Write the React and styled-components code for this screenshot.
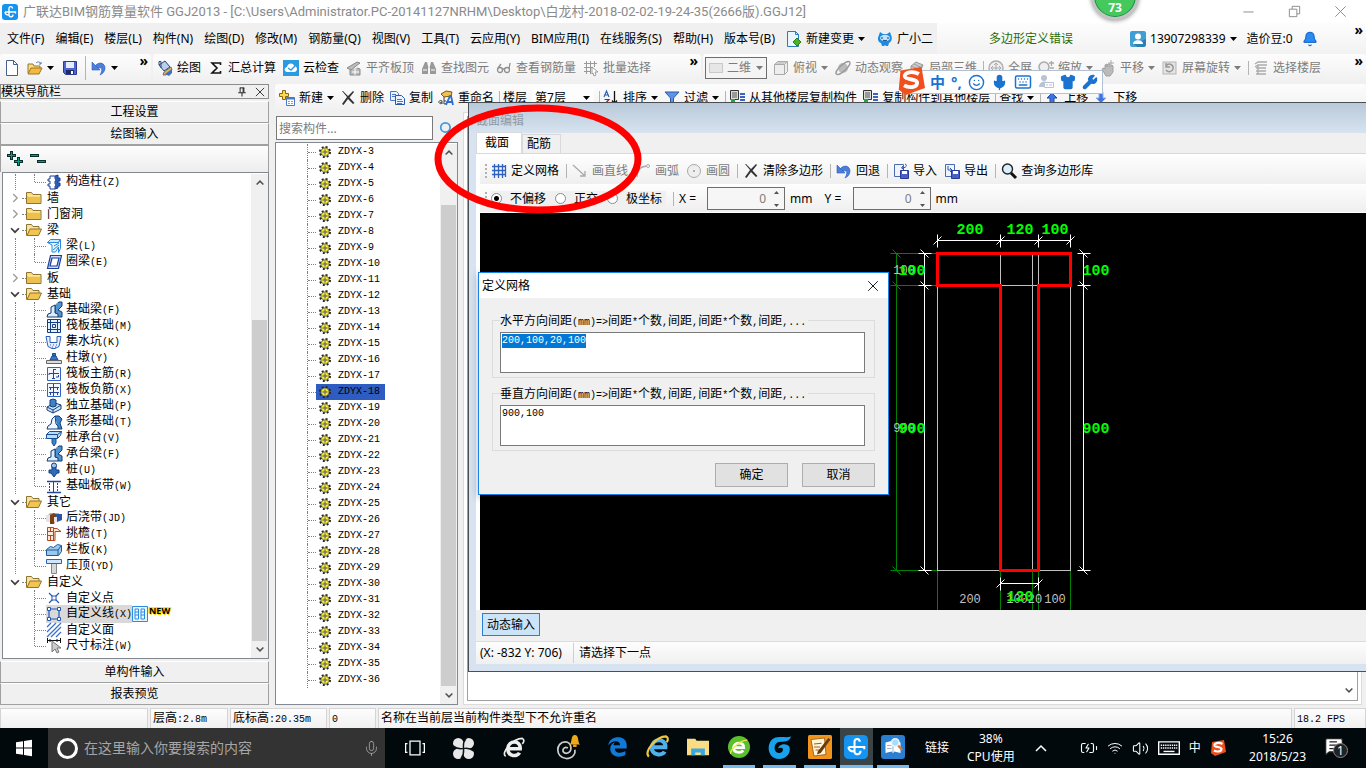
import { useEffect, useRef } from "react";
import styled, { createGlobalStyle } from "styled-components";
import {
  Smile,
  Mic,
  Keyboard,
  Shirt,
  Wrench,
  Bell,
  Search,
  Wifi,
  Volume2,
  BatteryCharging,
  MessageSquareText,
} from "lucide-react";

const menus = [
  "文件(F)",
  "编辑(E)",
  "楼层(L)",
  "构件(N)",
  "绘图(D)",
  "修改(M)",
  "钢筋量(Q)",
  "视图(V)",
  "工具(T)",
  "云应用(Y)",
  "BIM应用(I)",
  "在线服务(S)",
  "帮助(H)",
  "版本号(B)",
];

const arvore = [
  { texto: "构造柱(Z)", icone: "coluna", filho: true, ultimo: true },
  { texto: "墙" },
  { texto: "门窗洞" },
  { texto: "梁", aberto: true },
  { texto: "梁(L)", icone: "viga", filho: true },
  { texto: "圈梁(E)", icone: "anel", filho: true, ultimo: true },
  { texto: "板" },
  { texto: "基础", aberto: true },
  { texto: "基础梁(F)", icone: "base", filho: true },
  { texto: "筏板基础(M)", icone: "radier", filho: true },
  { texto: "集水坑(K)", icone: "poco", filho: true },
  { texto: "柱墩(Y)", icone: "pedestal", filho: true },
  { texto: "筏板主筋(R)", icone: "barra", filho: true },
  { texto: "筏板负筋(X)", icone: "barra2", filho: true },
  { texto: "独立基础(P)", icone: "sapata", filho: true },
  { texto: "条形基础(T)", icone: "corrida", filho: true },
  { texto: "桩承台(V)", icone: "bloco", filho: true },
  { texto: "承台梁(F)", icone: "base", filho: true },
  { texto: "桩(U)", icone: "estaca", filho: true },
  { texto: "基础板带(W)", icone: "faixa", filho: true, ultimo: true },
  { texto: "其它", aberto: true },
  { texto: "后浇带(JD)", icone: "junta", filho: true },
  { texto: "挑檐(T)", icone: "beiral", filho: true },
  { texto: "栏板(K)", icone: "guarda", filho: true },
  { texto: "压顶(YD)", icone: "topo", filho: true, ultimo: true },
  { texto: "自定义", aberto: true },
  { texto: "自定义点", icone: "ponto", filho: true, fim: true },
  { texto: "自定义线(X)", icone: "linha", filho: true, fim: true, ativo: true },
  { texto: "自定义面", icone: "face", filho: true, fim: true },
  { texto: "尺寸标注(W)", icone: "cota", filho: true, fim: true, ultimo: true },
];

const itens = Array.from({ length: 34 }, (_, i) => `ZDYX-${i + 3}`);

const desenhos = {
  novo: (
    <path d="M2.5.5h7l4 4v11h-11zM9.5.5v4h4" fill="#fff" stroke="#44608c" />
  ),
  abrir: (
    <>
      <path d="M1 13V4h5l1 2h6v2" fill="#f7dc86" stroke="#9a7626" />
      <path d="M1 14l3-6h11l-3 6z" fill="#f5b942" stroke="#9a7626" />
      <path d="M9 3c2-2 4-1 5 1m0-2v2h-2" fill="none" stroke="#5a78b0" />
    </>
  ),
  salvar: (
    <>
      <path d="M1.5 1.5h13v13h-11l-2-2z" fill="#5066cc" stroke="#2a3a96" />
      <path d="M4 2h8v6H4z" fill="#e4edfb" />
      <path d="M4 10h8v4H4z" fill="#222b66" />
      <path d="M9 11h2v3H9z" fill="#fff" />
    </>
  ),
  desfazer: (
    <>
      <path d="M4 6c4-5 10-3 10 2 0 4-3 6-5 7 2-3 3-8-1-7-1 0-2 1-2 1z" fill="#4c7fdc" stroke="#2c5cb8" strokeWidth=".6" />
      <path d="M1 2v8h8z" fill="#4c7fdc" stroke="#2c5cb8" strokeWidth=".6" />
    </>
  ),
  pintar: (
    <>
      <path d="M2 5l6-4 5 6-6 4z" fill="#b8d0ee" stroke="#29466e" />
      <path d="M2 5V1.5h2V8" fill="none" stroke="#29466e" />
      <path d="M14 7l1 3-6 5H6l1-3z" fill="#e3b64c" stroke="#4b5a86" strokeWidth=".8" />
      <path d="M8 14l7-5v4l-3 3z" fill="#3d6fc4" />
    </>
  ),
  soma: <path d="M12.5 5V3H4l5 5-5 5h8.5v-2" fill="none" stroke="#111" strokeWidth="1.6" />,
  nuvem: (
    <>
      <rect width="16" height="16" fill="#2a9be0" />
      <path d="M4 12c-4-1-2-5 0-5 1-5 7-4 7-1 4 0 4 6 0 6z" fill="#fff" />
      <path d="M5 8l3 2 4-4" fill="none" stroke="#2a9be0" strokeWidth="1.4" />
    </>
  ),
  placa: (
    <>
      <path d="M1 8l10-6 3 1-9 7zM4 10v5h10V9l-3-1" fill="#bbb" stroke="#8a8a8a" />
      <path d="M6 12h7M9 9v6" stroke="#fff" />
    </>
  ),
  binoculo: (
    <>
      <path d="M4 2h2l1 4v8H1V9zM10 2h2l3 7v5H9V6z" fill="#999" />
      <path d="M2 10h4M10 10h4M7 7h2" stroke="#ddd" strokeWidth="1.5" />
    </>
  ),
  oculos: (
    <g fill="none" stroke="#8f8f8f" strokeWidth="1.3">
      <circle cx="4" cy="10" r="2.5" />
      <circle cx="11" cy="10" r="2.5" />
      <path d="M2 8l3-4M13 9l1-6M7 9h1" />
    </g>
  ),
  lote: (
    <>
      <path d="M1 3.5h13M1 7.5h9M1 11.5h7M3.5 1v13M7.5 1v13M11.5 1v6" stroke="#999" fill="none" />
      <path d="M9 7l6 5h-3l1 3-2 1-1-3-1 1z" fill="#fff" stroke="#888" strokeWidth=".8" />
    </>
  ),
  plano: <rect x="1.5" y="3.5" width="13" height="9" fill="#e6e6e6" stroke="#c9c9c9" />,
  cubo: (
    <>
      <path d="M1.5 4.5l3-3h10v10l-3 3h-10z" fill="#eee" stroke="#aaa" />
      <path d="M1.5 4.5h10v10M11.5 4.5l3-3" fill="none" stroke="#aaa" />
      <path d="M2 4l3-2h9l-3 2z" fill="#ccc" />
    </>
  ),
  orbita: (
    <>
      <circle cx="8" cy="8" r="5" fill="#bbb" />
      <ellipse cx="8" cy="8" rx="9" ry="3" transform="rotate(-42 8 8)" fill="none" stroke="#999" strokeWidth="1.3" />
    </>
  ),
  local: (
    <>
      <path d="M2 6l5-4 7 3-4 9-8-3z" fill="#ccc" stroke="#999" />
      <path d="M2 6l7 3 5-4M9 9l1 5M5 4l6 3" fill="none" stroke="#999" />
    </>
  ),
  tela: (
    <g fill="none" stroke="#aaa">
      <circle cx="8" cy="8" r="7" fill="#eee" strokeWidth="1.3" />
      <path d="M8 3v10M3 8h10M6 5l2-2 2 2M6 11l2 2 2-2M5 6L3 8l2 2M11 6l2 2-2 2" />
    </g>
  ),
  zoom: (
    <g fill="none" stroke="#aaa">
      <circle cx="6" cy="7" r="5" fill="#eee" strokeWidth="1.5" />
      <path d="M9 11l3 4M11 3h5M13.5 1v5M12 8h4" strokeWidth="1.3" />
    </g>
  ),
  mao: (
    <>
      <path d="M2 9l2-1 1 1V5l2-1v3l1-3h2v3l2-2 1 1v6l-3 4H6z" fill="#bbb" stroke="#a0a0a0" />
      <path d="M11 0v6M8 3h6" stroke="#aaa" />
    </>
  ),
  girar: (
    <>
      <rect x="1" y="2" width="13" height="12" fill="#e4e4e4" stroke="#b5b5b5" />
      <path d="M4 6c3-4 8-1 7 3-1 3-5 4-7 1M4 3v4h4" fill="none" stroke="#999" strokeWidth="1.5" />
    </>
  ),
  andares: (
    <g fill="none" stroke="#aaa" strokeWidth="1.3">
      <path d="M2 4l3-2h9M2 7l3-2h9M3 8h10M3 11h10M3 14h10M5 5v9" />
    </g>
  ),
  criar: (
    <>
      <path d="M3.5.5h3v3h3v3h-3v3h-3v-3h-3v-3h3z" fill="#ffd94a" stroke="#8a6a10" />
      <path d="M7.5 7.5h8v8h-8z" fill="#fff" stroke="#4a78c8" />
      <path d="M7.5 8.5h8" stroke="#4a78c8" strokeWidth="2" />
      <path d="M9 11.5h2m1 0h2M9 13.5h2m1 0h2" stroke="#7da0dc" />
    </>
  ),
  excluir: (
    <path d="M2 1l5 6-5 7 1.5 1L8 9l5 5 1.5-1-5-5.500L14 2l-1-1-5 5-5-5z" fill="#333" />
  ),
  copiar: (
    <>
      <path d="M1.5 1.5h6l2 2v7h-8z" fill="#eaf2ff" stroke="#4a78c8" />
      <path d="M6.5 5.5h6l3 3v6h-9z" fill="#eaf2ff" stroke="#2c58a8" />
      <path d="M3 4.5h4M3 6.5h3M8 9.5h5M8 11.5h6M8 13.5h5" stroke="#4a78c8" />
    </>
  ),
  renomear: (
    <>
      <path d="M3 4l5-3 6 1-1 4-7 1z" fill="#f0c050" stroke="#7a5a18" />
      <path d="M1 13c-1-3 3-3 3-2v3M4 12c-3 0-3 3 0 1M6 7v7c4 0 3-4 0-3" fill="none" stroke="#444" />
      <path d="M8 15l4-9h1l2 9M10 12h4" fill="none" stroke="#2c6fd0" strokeWidth="1.8" />
    </>
  ),
  ordenar: (
    <>
      <path d="M1 7l2.5-6L6 7M2 5h3" fill="none" stroke="#2c5cb8" strokeWidth="1.2" />
      <path d="M1.5 9.5H6l-4.5 5H6" fill="none" stroke="#a02020" strokeWidth="1.2" />
      <path d="M11.5 1v12M9 10.5l2.5 3 2.5-3" fill="none" stroke="#111" strokeWidth="1.3" />
    </>
  ),
  filtro: <path d="M1 2h14l-5.500 6v6l-3 1V8z" fill="#5d93e6" stroke="#2c58a8" />,
  camadas: (
    <>
      <path d="M1.5.5h8v9h-8z" fill="#ddd" stroke="#333" />
      <path d="M3 3h5M3 5h5M3 7h5" stroke="#555" />
      <path d="M11 4h5M11 7h5M11 10h5M11 13h5" stroke="#3a66c0" strokeWidth="1.8" />
      <path d="M2 9h4v3h2l-4 4-4-4h2z" fill="#22a83c" />
    </>
  ),
  subir: <path d="M8 3l5 5h-3v6H6V8H3z" fill="#3d74e0" stroke="#1f4fae" />,
  descer: <path d="M8 13l5-5h-3V2H6v6H3z" fill="#3d74e0" stroke="#8fb0ee" />,
  folha: (
    <>
      <path d="M1.5.5h8l3 3v12h-11z" fill="#e9f5ff" stroke="#2f79b8" />
      <path d="M9.5.5v3h3" fill="none" stroke="#2f79b8" />
      <path d="M11 7l4 4-4 4-4-4z" fill="#4ab428" stroke="#2c8010" />
    </>
  ),
  mascote: (
    <>
      <path d="M2 4l1-3 3 2h4l3-2 1 3c2 4 0 7-2 8l-1 3H9l-1-1-1 1H5l-1-3C1 11 0 8 2 4z" fill="#1b8ae0" />
      <ellipse cx="8" cy="7" rx="5" ry="3.2" fill="#bfe4ff" />
      <path d="M5 6v2M11 6v2M6 9c1 1 3 1 4 0" stroke="#083a6c" fill="none" />
    </>
  ),
  usuario: (
    <>
      <rect width="16" height="16" rx="2" fill="#3f9fd4" />
      <path d="M16 8v6l-2 2H7l-3-3z" fill="#2c7fb0" />
      <circle cx="8" cy="5.5" r="3" fill="#fff" />
      <path d="M3 13c0-5 10-5 10 0z" fill="#fff" />
    </>
  ),
  marca: (
    <>
      <rect width="16" height="16" rx="3" fill="#1493f0" />
      <path d="M10.5 4.5c0-2.5-3.5-2.5-3.5 0V11c0 2.5 4 2.5 4-.5M3 8h10.5v1.5M3 8c0 2.500 2 3 4 3" fill="none" stroke="#fff" strokeWidth="1.4" />
    </>
  ),
  grade: (
    <path d="M1 3.5h14M1 7.5h14M1 11.5h14M3.5 1v14M7.5 1v14M11.5 1v14M14.5 2v12" stroke="#2f62bd" fill="none" strokeWidth="1.3" />
  ),
  reta: <path d="M1 2l12 11M13 8v5H8" fill="none" stroke="#aaa" strokeWidth="1.3" />,
  arco: (
    <>
      <path d="M2 14C2 7 6 3 13 3" fill="none" stroke="#aaa" strokeWidth="1.3" />
      <circle cx="13" cy="3" r="1.5" fill="#fff" stroke="#aaa" />
    </>
  ),
  circulo: (
    <>
      <circle cx="8" cy="8" r="6.5" fill="#eee" stroke="#aaa" />
      <circle cx="8" cy="8" r="1" fill="#999" />
    </>
  ),
  importar: (
    <>
      <path d="M1.5 1.5h9v12h-9z" fill="#eef4ff" stroke="#4a6cae" />
      <path d="M12 1c3 1 1 4-3 4m1-2L8.5 5 11 6.5" fill="none" stroke="#2c58a8" />
      <path d="M7.5 7.5h8v8h-8z" fill="#4a5fc4" stroke="#2a3a96" />
      <path d="M9 8h5v3H9z" fill="#fff" />
    </>
  ),
  exportar: (
    <>
      <path d="M1.5 1.5h9v12h-9z" fill="#eef4ff" stroke="#4a6cae" />
      <path d="M4 3v4h4M6 5l2 2-2 2" fill="none" stroke="#2c58a8" />
      <path d="M7.5 7.5h8v8h-8z" fill="#4a5fc4" stroke="#2a3a96" />
      <path d="M9 8h5v3H9z" fill="#fff" />
    </>
  ),
  lupa: (
    <>
      <circle cx="6.5" cy="6" r="5" fill="#d8efff" stroke="#222" strokeWidth="1.4" />
      <path d="M10 10l5 5" stroke="#111" strokeWidth="3" />
    </>
  ),
  engrenagem: (
    <>
      <circle cx="8" cy="8" r="6.5" fill="none" stroke="#222" strokeWidth="3" strokeDasharray="2.6 2.5" />
      <circle cx="8" cy="8" r="5.5" fill="#f4ea30" stroke="#444" />
      <path d="M8 3.5v9M3.5 8h9" stroke="#555" strokeDasharray="1.5 1" />
      <circle cx="8" cy="8" r="1.5" fill="#fff" stroke="#222" />
    </>
  ),
  pasta: (
    <>
      <path d="M.5 13.5v-11h5l1.5 2h8v9z" fill="#f7dc86" stroke="#8f7430" />
      <path d="M1 6h13v7H1z" fill="#edc04c" />
      <path d="M2 6h12" stroke="#fff3c0" />
    </>
  ),
  pastaAberta: (
    <>
      <path d="M.5 13.5v-11h5l1.5 2h6v3" fill="#f7e3a0" stroke="#8f7430" />
      <path d="M1 13.5L4 7h11.5l-3 6.5z" fill="#f2c450" stroke="#8f7430" />
    </>
  ),
  coluna: (
    <>
      <path d="M4 2h5v3h2v2H9v3h2v2H9v3H4v-3H2v-2h2V7H2V5h2z" fill="#fff" stroke="#173f94" />
      <path d="M9 2l3-1v3h2v3h-2v2h2v3h-2v2l-3 1" fill="#2f5cb8" stroke="#173f94" />
    </>
  ),
  viga: (
    <>
      <path d="M1.5 4.5l3-3h10l-2 3z" fill="#cdeaff" stroke="#2a8be0" />
      <path d="M1.5 4.5h11l2-3v9l-2 4V9l-3 5H6V7z" fill="#e4f4ff" stroke="#2a8be0" />
      <path d="M8 8l5-3M7 12l6-5" stroke="#2a8be0" />
    </>
  ),
  anel: (
    <path d="M4.5 1.5h11l-3 13h-11zM6 4l-2 8h7l2-8z" fill="#cfdcff" fillRule="evenodd" stroke="#1c3f9c" strokeWidth="1.2" />
  ),
  base: (
    <>
      <path d="M9 3l4-3h3v4l-4 4 4 2v5h-4l-3-4z" fill="#4f93cf" stroke="#123a78" />
      <path d="M9 3l3-2.500" stroke="#bfe0f8" />
      <path d="M1 15l1-3 3-1V5l4-2v8l3 1v3z" fill="#dcecfa" stroke="#123a78" />
    </>
  ),
  radier: (
    <path d="M1.5 1.5h13v13h-13zM4.5 1v14M11.5 1v14M1 4.5h14M1 11.5h14M6.5 6.5h3v3h-3z" fill="#e4f2ff" stroke="#143f80" />
  ),
  poco: (
    <>
      <path d="M0 2.5h4v6h7v-6h4l-2 10-4 2H6l-4-2z" fill="#e8f0ff" stroke="#2b5eb8" />
      <path d="M4 11h1m2 0h1m2 0h1M6 13h1m2 0h1" stroke="#2b5eb8" />
    </>
  ),
  pedestal: (
    <>
      <path d="M4 10l2-4h4l2 4zM6.5 3.5h3v2h-3z" fill="#3a78cc" stroke="#174a94" />
      <path d="M.5 10.5h15v3H.5z" fill="#ddd" stroke="#666" />
    </>
  ),
  barra: (
    <>
      <path d="M1.5 1.5h13v13h-13z" fill="#f2f7ff" stroke="#3560c4" />
      <path d="M7.5 3v10M3 9V7.5h10M10 11h2.5V9M7 3.5h3M6 12.5h3" stroke="#23459c" fill="none" />
    </>
  ),
  barra2: (
    <>
      <path d="M1.5 1.5h13v13h-13z" fill="#f2f7ff" stroke="#3560c4" />
      <path d="M7.5 2v12M3 5.5h10M3 10.5h10M4.5 5v3M11.5 5v3M4.5 10v3M11.5 10v3" stroke="#23459c" fill="none" />
    </>
  ),
  sapata: (
    <>
      <path d="M1 9l8-4 6 2v4l-8 4-6-3z" fill="#cfe3f7" stroke="#123f80" />
      <path d="M4 2l3-1 3 1v6L7 9 4 8z" fill="#3f82c8" stroke="#123f80" />
      <path d="M1 9l6 3 8-5M7 12v3" fill="none" stroke="#123f80" />
    </>
  ),
  corrida: (
    <>
      <path d="M9 2h4l3 3-2 4 2 6h-4" fill="#3f82c8" stroke="#123f80" />
      <path d="M1 15l1-3 3-2 1-5 3-3 1 8 2 2v3z" fill="#f0f6ff" stroke="#123f80" />
    </>
  ),
  bloco: (
    <>
      <path d="M6 7h4v6l-2 3-2-3z" fill="#3f82c8" stroke="#1a4f98" />
      <path d="M.5 4.5l3-3h12l-1 4-3 3H.5z" fill="#b9dcf5" stroke="#1a4f98" />
      <path d="M.5 4.5h11l4-3M11.5 4.5v4" fill="none" stroke="#1a4f98" />
    </>
  ),
  estaca: (
    <>
      <path d="M6 3h4v5h3v3h-2l-3 4-3-4H3V8h3z" fill="#2d6cb8" stroke="#143f80" />
      <circle cx="8" cy="3.5" r="2.5" fill="#9cc8f0" stroke="#143f80" />
    </>
  ),
  faixa: (
    <>
      <path d="M1 3.5h14M1 14.5h14" stroke="#23459c" strokeWidth="1.5" />
      <path d="M7.5 4v10" stroke="#23459c" />
      <path d="M3.5 5v9M11.5 5v9" stroke="#23459c" strokeDasharray="2 1" />
    </>
  ),
  junta: (
    <>
      <path d="M1 6l3-3h9l-3 9H1z" fill="#b9b0a8" />
      <path d="M4 5l4-2 3 2-3 9H4z" fill="#7c3f18" />
      <path d="M10 4h6v6l-5 2z" fill="#2c55a8" />
      <path d="M0 5h4v7H0zM8 7h3v5H8z" fill="#e4e4e4" />
    </>
  ),
  beiral: (
    <path d="M1.5 1.5h6v13h-6zM1 5.5h6M1 9.5h6M4.5 2v3M4.5 10v4M8 2.5h3l4 3H9v9H7" fill="#ffe9dd" stroke="#b04a20" />
  ),
  guarda: (
    <>
      <path d="M.5 7.5l4-3 3 1 4-3 4 1v6l-3 4H.5z" fill="#9cc8ec" stroke="#1a5a98" />
      <path d="M1 8h11l3-4M12 8v5" fill="none" stroke="#1a5a98" />
    </>
  ),
  topo: (
    <>
      <path d="M5.5 5.5h5v10h-5z" fill="#d8d8d8" stroke="#888" />
      <path d="M.5 1.5h15v4H.5z" fill="#cfe6ff" stroke="#2b62c4" />
    </>
  ),
  ponto: (
    <>
      <path d="M3 3l10 10M13 3L3 13" stroke="#2358b8" strokeWidth="1.2" />
      <rect x="6" y="6" width="4" height="4" fill="#fff" stroke="#2358b8" />
    </>
  ),
  linha: (
    <>
      <path d="M3 3h10v10H3z" fill="none" stroke="#2358b8" strokeWidth="1.2" />
      <path d="M1.5 1.5h3v3h-3zM11.5 1.5h3v3h-3zM1.5 11.5h3v3h-3zM11.5 11.5h3v3h-3z" fill="#fff" stroke="#2358b8" />
    </>
  ),
  face: (
    <path d="M1 5l4-4M1 10l9-9M1 15L15 1M5 15L15 5M10 15l5-5" stroke="#3a72cc" strokeWidth="1.3" />
  ),
  cota: (
    <>
      <path d="M1.5 0v5M14.5 0v5M1 2.5h14M4 1v3M11 1v3" stroke="#111" />
      <path d="M6 3v11l3-3 2 4 2-1-2-4h4z" fill="#ccc" stroke="#777" />
    </>
  ),
  livro: (
    <path d="M.5.5h15v15H.5zM3 3h3.5v10H3zM9 3h3.5v10H9zM3 6h4M3 9h4M9 6h4M9 9h4" fill="#eaf6ff" stroke="#2a8be0" />
  ),
  mais: (
    <>
      <path d="M4.5 0v9M0 4.5h9M11.5 6v9M7 10.5h9" stroke="#03302c" strokeWidth="3" />
      <path d="M4.5 1v7M1 4.5h7M11.5 7v7M8 10.5h7" stroke="#0c9a8e" />
    </>
  ),
  menos: (
    <>
      <path d="M0 4.5h9M7 10.5h9" stroke="#03302c" strokeWidth="3" />
      <path d="M1 4.5h7M8 10.5h7" stroke="#0c9a8e" />
    </>
  ),
  janelas: (
    <path d="M0 2.3L7 1.200v6.300H0zM8 1l8-1.200v7.700H8zM0 8.500h7v6.300l-7-1.100zM8 8.500h8v7.700L8 15z" fill="#fff" />
  ),
  visao: (
    <path d="M4 2.5h8v11H4zM2 4.5H.5v7H2M14 4.5h1.5v7H14" fill="none" stroke="#fff" />
  ),
  catavento: (
    <>
      <g fill="#e8e8e8">
        <circle cx="4" cy="4" r="4" />
        <circle cx="12" cy="4" r="4" />
        <circle cx="4" cy="12" r="4" />
        <circle cx="12" cy="12" r="4" />
        <path d="M4 4h8v8H4z" />
      </g>
      <path d="M0 6c4 3 6 2 8 2s4-1 8 2M10 0C7 4 8 6 8 8s1 4-2 8" fill="none" stroke="#0a1214" strokeWidth="1.1" />
    </>
  ),
  eBranco: (
    <>
      <path d="M3.5 8.5h9C13 2 4 2 3.5 8.5c0 6 7 6 8.5 3" fill="none" stroke="#eee" strokeWidth="2.6" />
      <path d="M2 14C-2 12 7 1 14 1c2 1 1 3 0 4" fill="none" stroke="#eee" strokeWidth="1.2" />
    </>
  ),
  espiral: (
    <>
      <path d="M8.5 8c-3-1.500-4 3-1 3 4 0 3.500-6.500-.5-6.500-5.500 0-6 9 .5 9.500 4 0 5.500-3 5-5" fill="none" stroke="#ccc" />
      <path d="M9.5 6c1.500-1 .5-5.500 3-5.500S14 5 15.500 6z" fill="#f0a818" />
      <path d="M11.5 6.700h2" stroke="#f0a818" strokeWidth="1.4" />
    </>
  ),
  edge: (
    <path d="M1 7C2-1 15-1 15 7v2.500H6c0 4 5 4 8 2v3C8 17.500 2 15 2.500 9c.5-3 3-4 3.500-4-1 1-1 2-1 2h5c0-4-6-4-9 0z" fill="#0f7ad8" />
  ),
  ie: (
    <>
      <path d="M4 8.500h9.500C14 2 4.500 2 4 8.500c0 6 7.500 6 9 3" fill="none" stroke="#4db1ee" strokeWidth="2.8" />
      <path d="M2 15C-2 12 7 1 14 1c2 1 1 3 .5 4" fill="none" stroke="#f3c63a" strokeWidth="1.5" />
    </>
  ),
  explorador: (
    <>
      <path d="M0 2h6l1 1.500h9V14H0z" fill="#f9dc84" />
      <path d="M3 14V9h10v5h-3v-2H6v2z" fill="#3aa8e0" />
    </>
  ),
  eVerde: (
    <>
      <circle cx="8" cy="8" r="8" fill="#5cbf2c" />
      <path d="M4 8.500h7.500C12 4 4.500 4 4 8.500c0 4 6 4 7 2" fill="none" stroke="#fff" strokeWidth="2" />
      <path d="M2 13C1 11 8 3 14 3" fill="none" stroke="#f5e84a" />
    </>
  ),
  gAzul: (
    <path d="M16 1c-1 3-3 3.500-7 3.500-5 0-5 7.500-1 7.500 2 0 3-1.500 2.500-3-1-1-3 0-3 0 0-3 6-4 7.500-1 1 4-2 8-7 8C-1 16-1 2 7 1.500c4-.5 6 .5 9-.5z" fill="#18a2ee" />
  ),
  bloco2: (
    <>
      <rect width="16" height="16" rx="1" fill="#f0941c" />
      <path d="M2 3l9-1 1 11-8 1z" fill="#fff6dc" stroke="#a05c10" strokeWidth=".6" />
      <path d="M4 6l5-.5M4 8h4M5 10h3" stroke="#a05c10" strokeWidth=".8" />
      <path d="M6.5 11l7-9 1.500 1-6.500 9-2.500 1z" fill="#6a3a10" />
    </>
  ),
  dicionario: (
    <>
      <rect width="16" height="16" rx="2" fill="#2b7fd0" />
      <path d="M3 5l4-1 1 1 1-1 4 1v7l-4-1-1 1-1-1-4 1z" fill="#fff" />
      <path d="M8 5v7M4 7h3M4 9h3" stroke="#9ab8d8" strokeWidth=".7" />
      <circle cx="9.5" cy="5" r="2.5" fill="#a8dcff" stroke="#e8f6ff" />
      <path d="M11.5 7l2.500 3" stroke="#d97a2c" strokeWidth="1.5" />
    </>
  ),
  sogou: (
    <>
      <path d="M2 2l12-2 2 12-11 4-4-3z" fill="#f0501e" />
      <path d="M12.5 4C9 2 4 3 4.5 5.5c.5 2 7 1 7 3.5 0 3-5 3-7.500 1.500" fill="none" stroke="#fff" strokeWidth="2.2" />
    </>
  ),
  teclado: (
    <>
      <path d="M.5 3.5h15v9H.5z" fill="none" stroke="#fff" />
      <path d="M2 6h12M2 8h12" stroke="#fff" strokeDasharray="1 .6" />
      <path d="M4 10.5h8" stroke="#fff" />
    </>
  ),
  pessoa: (
    <>
      <circle cx="6" cy="4" r="3" fill="#b9c3d4" />
      <path d="M1 13c0-7 10-7 10-2v2z" fill="#b9c3d4" />
      <path d="M6.5 8.5h9v5h-9z" fill="#fff" stroke="#b9c3d4" />
      <path d="M8 11h2m1 0h3" stroke="#b9c3d4" />
    </>
  ),
  alfinete: (
    <path d="M5 2.5h6M5.5 2.5v6M9.5 2.5v6M10.5 2.5v6M3 9h10M8 9v5" fill="none" stroke="#111" strokeWidth="1.2" />
  ),
  fechar: <path d="M2.5 2.5l11 11M13.5 2.5l-11 11" fill="none" stroke="currentColor" />,
  minimizar: <path d="M2.5 8.5h11" stroke="currentColor" />,
  restaurar: (
    <path d="M2.5 5.5h8v8h-8zM5.5 5.5v-3h8v8h-3" fill="none" stroke="currentColor" />
  ),
  cima: <path d="M3.5 10L8 5.5l4.5 4.5" fill="none" stroke="currentColor" strokeWidth="2" />,
  baixo: <path d="M3.5 6L8 10.5 12.500 6" fill="none" stroke="currentColor" strokeWidth="2" />,
  direita: <path d="M6 3.5L10.5 8 6 12.500" fill="none" stroke="currentColor" strokeWidth="1.5" />,
  mostrar: <path d="M3 11l5-5 5 5" fill="none" stroke="currentColor" strokeWidth="1.5" />,
};

function Icone({ nome, tam = 16 }) {
  return (
    <Svg width={tam} height={tam} viewBox="0 0 16 16" aria-hidden="true">
      {desenhos[nome]}
    </Svg>
  );
}

function Seta() {
  return (
    <Svg width="8" height="4" viewBox="0 0 8 4" aria-hidden="true">
      <path d="M0 0h7L3.5 4z" fill="currentColor" />
    </Svg>
  );
}

function Mais() {
  return (
    <Extra type="button" aria-label="更多">
      »
    </Extra>
  );
}

function Ferramenta({ icone, seta, inativo, children }) {
  return (
    <Botao type="button" disabled={inativo}>
      {icone && <Icone nome={icone} />}
      {children}
      {seta && <Seta />}
    </Botao>
  );
}

// chinês em 12px, latino em largura fixa de meia letra
function Song({ children }) {
  return children
    .split(/([\x20-\x7e]+)/)
    .filter(Boolean)
    .map((t, i) => (/^[\x20-\x7e]/.test(t) ? <Meia key={i}>{t}</Meia> : t));
}

function Rolagem({ inicio, fim }) {
  return (
    <Trilho>
      <Icone nome="cima" tam={12} />
      <Polegar $inicio={inicio} $fim={fim} />
      <Icone nome="baixo" tam={12} />
    </Trilho>
  );
}

function Navegador() {
  return (
    <Lateral>
      <Legenda>
        <span>模块导航栏</span>
        <Icone nome="alfinete" tam={12} />
        <Icone nome="fechar" tam={12} />
      </Legenda>
      <Secao type="button">工程设置</Secao>
      <Secao type="button">绘图输入</Secao>
      <BarraArvore>
        <Icone nome="mais" />
        <Icone nome="menos" />
      </BarraArvore>
      <CaixaArvore>
        <Ramos>
          {arvore.map((no, i) =>
            no.filho ? (
              <Folha key={i}>
                <Vertical $oculto={no.fim} />
                <Vertical $meio={no.ultimo} />
                <Horizontal $w={11} />
                <Rotulo $ativo={no.ativo}>
                  <Icone nome={no.icone} />
                  <span>
                    <Song>{no.texto}</Song>
                  </span>
                </Rotulo>
                {no.ativo && (
                  <>
                    <Icone nome="livro" />
                    <Novo>NEW</Novo>
                  </>
                )}
              </Folha>
            ) : (
              <Pasta key={i} $aberto={no.aberto}>
                <Icone nome={no.aberto ? "baixo" : "direita"} tam={14} />
                <Horizontal $w={4} />
                <Icone nome={no.aberto ? "pastaAberta" : "pasta"} />
                <NomePasta>{no.texto}</NomePasta>
              </Pasta>
            )
          )}
        </Ramos>
        <Rolagem inicio={129} fim={0} />
      </CaixaArvore>
      <Secao type="button">单构件输入</Secao>
      <Secao type="button">报表预览</Secao>
    </Lateral>
  );
}

function Componentes() {
  return (
    <ColunaLista>
      <Busca>
        <CampoBusca type="text" placeholder="搜索构件..." aria-label="搜索构件" />
        <Search size={14} color="#3f9be0" strokeWidth={3} />
      </Busca>
      <CaixaLista>
        <Ramos>
          {itens.map((item) => (
            <Item key={item}>
              <Vertical />
              <Horizontal $w={8} />
              <NomeItem $ativo={item === "ZDYX-18"}>
                <Icone nome="engrenagem" tam={12} />
                <Meia>{item}</Meia>
              </NomeItem>
            </Item>
          ))}
        </Ramos>
        <Rolagem inicio={44} fim={1} />
      </CaixaLista>
    </ColunaLista>
  );
}

// risco de cota: traço perpendicular mais a diagonal
function Marca({ x, y, vertical, cor = "#fff" }) {
  return (
    <path
      d={
        vertical
          ? `M${x - 6} ${y}h13M${x - 4} ${y - 4}l8 8`
          : `M${x} ${y - 6}v13M${x + 4} ${y - 4}l-8 8`
      }
      stroke={cor}
      fill="none"
    />
  );
}

function Desenho() {
  const xs = [937.5, 1000.5, 1032.5, 1038.5, 1070.5];
  const ys = [253.5, 285.5, 570.5];
  return (
    <Tela aria-label="截面">
      <g transform="translate(-480 -213)">
        <g stroke="#008000">
          {xs.map((x) => (
            <path key={x} d={`M${x} 571V610`} />
          ))}
          {ys.map((y) => (
            <path key={y} d={`M891 ${y}H937`} />
          ))}
          <path d="M896.5 253V571" />
        </g>
        {ys.map((y) => (
          <Marca key={y} x={896.5} y={y} vertical cor="#008000" />
        ))}
        <g stroke="#c0c0c0">
          {xs.map((x) => (
            <path key={x} d={`M${x} 253V571`} />
          ))}
          {ys.map((y) => (
            <path key={y} d={`M937 ${y}H1071`} />
          ))}
        </g>
        <path
          d="M937.5 240.5H1070.5M924.5 253V571M1083.5 253V571M1000 583.5H1039"
          stroke="#fff"
        />
        {[937.5, 1000.5, 1038.5, 1070.5].map((x) => (
          <Marca key={x} x={x} y={240.5} />
        ))}
        {ys.map((y) => (
          <g key={y}>
            <Marca x={924.5} y={y} vertical />
            <Marca x={1083.5} y={y} vertical />
          </g>
        ))}
        <Marca x={1000.5} y={583.5} />
        <Marca x={1038.5} y={583.5} />
        <path
          d="M937.5 253.5H1070.5V285.5H1038.5V570.5H1000.5V285.5H937.5Z"
          fill="none"
          stroke="#f00"
          strokeWidth="3"
        />
        <CotaFina x="904" y="274">100</CotaFina>
        <CotaFina x="904" y="432">900</CotaFina>
        <CotaFina x="970" y="603">200</CotaFina>
        <CotaFina x="1017" y="603">100</CotaFina>
        <CotaFina x="1035" y="603">20</CotaFina>
        <CotaFina x="1055" y="603">100</CotaFina>
        <Cota x="970" y="234">200</Cota>
        <Cota x="1020" y="234">120</Cota>
        <Cota x="1055" y="234">100</Cota>
        <Cota x="912" y="275">100</Cota>
        <Cota x="1096" y="275">100</Cota>
        <Cota x="912" y="433">900</Cota>
        <Cota x="1096" y="433">900</Cota>
        <Cota x="1020" y="601">120</Cota>
      </g>
    </Tela>
  );
}

function Numero({ id, rotulo }) {
  return (
    <>
      <Eixo htmlFor={id}>{rotulo}</Eixo>
      <CaixaNumero>
        <input id={id} defaultValue="0" disabled />
        <Svg width="8" height="18" viewBox="0 0 8 18" aria-hidden="true">
          <path d="M1 4l2.5-3L6 4zM1 14h5l-2.500 3z" fill="#555" />
        </Svg>
      </CaixaNumero>
      <Unidade>mm</Unidade>
    </>
  );
}

function Editor() {
  return (
    <Janela>
      <TituloJanela>截面编辑</TituloJanela>
      <Conteudo>
        <Abas role="tablist">
          <Aba type="button" role="tab" aria-selected="true" $ativa>
            截面
          </Aba>
          <Aba type="button" role="tab" aria-selected="false">
            配筋
          </Aba>
        </Abas>
        <Corpo>
          <BarraEditor>
            <Alca />
            <Ferramenta icone="grade">定义网格</Ferramenta>
            <Divisor />
            <Ferramenta icone="reta" inativo>画直线</Ferramenta>
            <Ferramenta icone="arco" inativo>画弧</Ferramenta>
            <Ferramenta icone="circulo" inativo>画圆</Ferramenta>
            <Divisor />
            <Ferramenta icone="excluir">清除多边形</Ferramenta>
            <Divisor />
            <Ferramenta icone="desfazer">回退</Ferramenta>
            <Divisor />
            <Ferramenta icone="importar">导入</Ferramenta>
            <Ferramenta icone="exportar">导出</Ferramenta>
            <Divisor />
            <Ferramenta icone="lupa">查询多边形库</Ferramenta>
          </BarraEditor>
          <BarraEditor>
            <Alca />
            <Opcoes>
              <Opcao>
                <input type="radio" name="desvio" defaultChecked />
                不偏移
              </Opcao>
              <Opcao>
                <input type="radio" name="desvio" />
                正交
              </Opcao>
              <Opcao>
                <input type="radio" name="desvio" />
                极坐标
              </Opcao>
            </Opcoes>
            <Divisor />
            <Numero id="eixo-x" rotulo="X =" />
            <Numero id="eixo-y" rotulo="Y =" />
          </BarraEditor>
          <Desenho />
        </Corpo>
        <Rodape>
          <Dinamico type="button">动态输入</Dinamico>
        </Rodape>
        <Estado>
          <Coordenada>(X: -832 Y: 706)</Coordenada>
          <span>请选择下一点</span>
        </Estado>
      </Conteudo>
    </Janela>
  );
}

function Dialogo() {
  const campo = useRef(null);

  useEffect(() => {
    campo.current.focus();
    campo.current.select();
  }, []);

  return (
    <Caixa role="dialog" aria-label="定义网格">
      <TopoDialogo>
        <span>定义网格</span>
        <Fechar type="button" aria-label="关闭">
          <Icone nome="fechar" tam={14} />
        </Fechar>
      </TopoDialogo>
      <Formulario>
        <Grupo>
          <label htmlFor="horizontal">
            <Song>水平方向间距(mm)=&gt;间距*个数,间距,间距*个数,间距,...</Song>
          </label>
          <textarea id="horizontal" ref={campo} defaultValue="200,100,20,100" spellCheck="false" />
        </Grupo>
        <Grupo>
          <label htmlFor="vertical">
            <Song>垂直方向间距(mm)=&gt;间距*个数,间距,间距*个数,间距,...</Song>
          </label>
          <textarea id="vertical" defaultValue="900,100" spellCheck="false" />
        </Grupo>
        <Acoes>
          <Acao type="button">确定</Acao>
          <Acao type="button">取消</Acao>
        </Acoes>
      </Formulario>
    </Caixa>
  );
}

function Sogou() {
  return (
    <BarraSogou>
      <LogoSogou>
        <Icone nome="sogou" tam={28} />
      </LogoSogou>
      <b>中</b>
      <b>°,</b>
      <Smile size={17} />
      <Mic size={17} fill="#1b73d0" />
      <Keyboard size={18} />
      <Icone nome="pessoa" />
      <Shirt size={16} fill="#1b73d0" />
      <Wrench size={16} fill="#1b73d0" />
    </BarraSogou>
  );
}

function BarraTarefas() {
  return (
    <Tarefas>
      <Iniciar type="button" aria-label="开始">
        <Icone nome="janelas" />
      </Iniciar>
      <Cortana>
        <Anel />
        <input type="text" placeholder="在这里输入你要搜索的内容" aria-label="搜索" />
        <Mic size={17} strokeWidth={1} color="#bbb" />
      </Cortana>
      <Largos>
        <Icone nome="visao" tam={20} />
        <Icone nome="catavento" tam={21} />
        <Icone nome="eBranco" tam={22} />
        <Icone nome="espiral" tam={28} />
      </Largos>
      <Apps>
        <Programa><Icone nome="edge" tam={21} /></Programa>
        <Programa><Icone nome="ie" tam={23} /></Programa>
        <Programa><Icone nome="explorador" tam={22} /></Programa>
        <Programa $aberto><Icone nome="eVerde" tam={22} /></Programa>
        <Programa $aberto><Icone nome="gAzul" tam={24} /></Programa>
        <Programa $aberto><Icone nome="bloco2" tam={24} /></Programa>
        <Programa $aberto $frente><Icone nome="marca" tam={24} /></Programa>
        <Programa $aberto><Icone nome="dicionario" tam={24} /></Programa>
      </Apps>
      <span>链接</span>
      <Pilha>
        <span>38%</span>
        <span>CPU使用</span>
      </Pilha>
      <Bandeja>
        <Icone nome="mostrar" tam={16} />
        <BatteryCharging size={18} strokeWidth={1.5} />
        <Wifi size={16} strokeWidth={1.5} />
        <Volume2 size={17} strokeWidth={1.5} />
        <Icone nome="teclado" tam={22} />
        <span>中</span>
        <Icone nome="sogou" tam={16} />
      </Bandeja>
      <Pilha>
        <span>15:26</span>
        <span>2018/5/23</span>
      </Pilha>
      <Avisos>
        <MessageSquareText size={20} strokeWidth={1.5} fill="#fff" stroke="#222" />
        <Contador>1</Contador>
      </Avisos>
    </Tarefas>
  );
}

export default function App() {
  return (
    <Pagina>
      <Global />
      <Titulo>
        <Icone nome="marca" />
        <h1>
          广联达BIM钢筋算量软件 GGJ2013 - [C:\Users\Administrator.PC-20141127NRHM\Desktop\白龙村-2018-02-02-19-24-35(2666版).GGJ12]
        </h1>
        <Controles>
          <Icone nome="minimizar" tam={15} />
          <Icone nome="restaurar" tam={15} />
          <Icone nome="fechar" tam={15} />
        </Controles>
      </Titulo>
      <Menu>
        <Itens>
          {menus.map((m) => (
            <Botao type="button" key={m}>
              {m}
            </Botao>
          ))}
          <Ferramenta icone="folha" seta>新建变更</Ferramenta>
          <Ferramenta icone="mascote">广小二</Ferramenta>
        </Itens>
        <Mensagem>多边形定义错误</Mensagem>
        <Conta>
          <Ferramenta icone="usuario" seta>13907298339</Ferramenta>
          <span>造价豆:0</span>
          <Bell size={16} fill="#2a8cf0" color="#1d6fd0" />
          <Mais />
        </Conta>
      </Menu>
      <Barras>
        <Barra>
          <Ferramenta icone="novo" />
          <Ferramenta icone="abrir" seta />
          <Ferramenta icone="salvar" />
          <Divisor $alto />
          <Ferramenta icone="desfazer" seta />
          <Mais />
        </Barra>
        <Barra>
          <Ferramenta icone="pintar">绘图</Ferramenta>
          <Ferramenta icone="soma">汇总计算</Ferramenta>
          <Ferramenta icone="nuvem">云检查</Ferramenta>
          <Ferramenta icone="placa" inativo>平齐板顶</Ferramenta>
          <Ferramenta icone="binoculo" inativo>查找图元</Ferramenta>
          <Ferramenta icone="oculos" inativo>查看钢筋量</Ferramenta>
          <Ferramenta icone="lote" inativo>批量选择</Ferramenta>
          <Mais />
        </Barra>
        <Barra $gap={6} $inicio={2}>
          <Combo $borda>
            <Icone nome="plano" />
            <select aria-label="视图" disabled>
              <option>二维</option>
            </select>
            <Seta />
          </Combo>
          <Ferramenta icone="cubo" seta inativo>俯视</Ferramenta>
          <Ferramenta icone="orbita" inativo>动态观察</Ferramenta>
          <Ferramenta icone="local" inativo>局部三维</Ferramenta>
          <Divisor />
          <Ferramenta icone="tela" inativo>全屏</Ferramenta>
          <Ferramenta icone="zoom" seta inativo>缩放</Ferramenta>
          <Ferramenta icone="mao" seta inativo>平移</Ferramenta>
          <Ferramenta icone="girar" seta inativo>屏幕旋转</Ferramenta>
          <Divisor />
          <Ferramenta icone="andares" inativo>选择楼层</Ferramenta>
          <Mais />
        </Barra>
      </Barras>
      <Principal>
        <Navegador />
        <Trabalho>
          <Barra $gap={5}>
            <Ferramenta icone="criar" seta>新建</Ferramenta>
            <Ferramenta icone="excluir">删除</Ferramenta>
            <Ferramenta icone="copiar">复制</Ferramenta>
            <Ferramenta icone="renomear">重命名</Ferramenta>
            <Divisor />
            <label htmlFor="andar">楼层</label>
            <Combo>
              <select id="andar">
                <option>第7层</option>
              </select>
              <Seta />
            </Combo>
            <Divisor />
            <Ferramenta icone="ordenar" seta>排序</Ferramenta>
            <Ferramenta icone="filtro" seta>过滤</Ferramenta>
            <Divisor />
            <Ferramenta icone="camadas">从其他楼层复制构件</Ferramenta>
            <Ferramenta icone="camadas">复制构件到其他楼层</Ferramenta>
            <Divisor />
            <Ferramenta seta>查找</Ferramenta>
            <Divisor />
            <Ferramenta icone="subir">上移</Ferramenta>
            <Ferramenta icone="descer">下移</Ferramenta>
          </Barra>
          <Area>
            <Componentes />
            <Propriedades>
              <Fundo>
                <Icone nome="baixo" tam={12} />
              </Fundo>
            </Propriedades>
          </Area>
        </Trabalho>
      </Principal>
      <Status>
        <span />
        <span><Song>层高:2.8m</Song></span>
        <span><Song>底标高:20.35m</Song></span>
        <span><Song>0</Song></span>
        <span>名称在当前层当前构件类型下不允许重名</span>
        <span><Song>18.2 FPS</Song></span>
      </Status>
      <BarraTarefas />
      <Editor />
      <Dialogo />
      <Destaque width="208" height="112" viewBox="0 0 208 112" aria-hidden="true">
        <ellipse cx="104" cy="56" rx="100" ry="51" fill="none" stroke="#f00" strokeWidth="7" />
      </Destaque>
      <Sogou />
      <Selo>73</Selo>
    </Pagina>
  );
}

const Global = createGlobalStyle`
  body {
    margin: 0;
    background-color: #f0f0f0;
    color: #000000;
    font: 12px/16px "Noto Sans", "Noto Sans CJK SC", sans-serif;
  }

  *, *::before, *::after {
    box-sizing: border-box;
  }

  button, input, select, textarea {
    font: inherit;
    color: inherit;
    margin: 0;
    padding: 0;
    border: none;
    border-radius: 0;
    background: none;
  }
`;

const Pagina = styled.div`
  min-height: 100vh;
  display: flex;
  flex-direction: column;
  position: relative;
  overflow: hidden;
`;

const Svg = styled.svg`
  display: block;
  flex-shrink: 0;
  overflow: visible;
`;

const Titulo = styled.header`
  height: 23px;
  padding: 0 18px 0 2px;
  display: flex;
  align-items: center;
  gap: 5px;
  background-color: #ffffff;
  color: #8a8a8a;

  h1 {
    flex: 1;
    margin: 0;
    font-family: Roboto, "Noto Sans CJK SC", sans-serif;
    font-size: 13px;
    font-weight: 400;
    white-space: nowrap;
  }
`;

const Controles = styled.div`
  display: flex;
  gap: 31px;
`;

const Botao = styled.button`
  display: flex;
  align-items: center;
  gap: 4px;
  white-space: nowrap;

  &:disabled {
    color: #7c7c7c;
  }
`;

const Extra = styled.button`
  margin-left: auto;
  align-self: flex-start;
  font-size: 14px;
  font-weight: 700;
  line-height: 14px;
`;

const Menu = styled.nav`
  height: 31px;
  display: flex;
  align-items: stretch;
`;

const Itens = styled.div`
  display: flex;
  align-items: center;
  gap: 11px;
  padding: 0 4px 0 7px;
`;

const Mensagem = styled.div`
  width: 188px;
  display: flex;
  align-items: center;
  justify-content: center;
  background: linear-gradient(#fdfdfd, #f2f2f2);
  color: #2f6b00;
`;

const Conta = styled.div`
  flex: 1;
  display: flex;
  align-items: center;
  gap: 9px;
  padding: 0 3px 0 5px;
  background: linear-gradient(#fdfdfd, #f2f2f2);
`;

const Barras = styled.div`
  display: grid;
  grid-template-columns: 151px 548px 1fr;
  gap: 2px;
`;

const Barra = styled.div`
  height: 28px;
  display: flex;
  align-items: center;
  gap: ${({ $gap = 7 }) => $gap}px;
  padding: 0 3px 0 ${({ $inicio = 4 }) => $inicio}px;
  background: linear-gradient(#fdfdfd, #f0f0f0);
  border-radius: 3px;
  white-space: nowrap;
`;

const Divisor = styled.span`
  width: 1px;
  height: ${({ $alto }) => ($alto ? 24 : 14)}px;
  margin-right: -2px;
  background-color: #b4b4b4;
`;

const Combo = styled.div`
  width: 62px;
  height: 22px;
  padding: 0 2px;
  display: flex;
  align-items: center;
  gap: 3px;
  border: 1px solid ${({ $borda }) => ($borda ? "#6e6e6e" : "#fdfdfd")};
  background-color: ${({ $borda }) => ($borda ? "#f4f4f4" : "#fdfdfd")};
  color: ${({ $borda }) => ($borda ? "#7c7c7c" : "#000000")};

  select {
    flex: 1;
    min-width: 0;
    appearance: none;
    opacity: 1;
  }
`;

const Principal = styled.main`
  flex: 1;
  display: flex;
  gap: 6px;
  padding: 2px 0 3px;
`;

const Lateral = styled.aside`
  width: 269px;
  display: flex;
  flex-direction: column;
`;

const Legenda = styled.div`
  height: 15px;
  margin-bottom: 2px;
  padding-right: 2px;
  display: flex;
  align-items: center;
  gap: 6px;
  border: 1px solid #8c8c8c;
  line-height: 13px;

  span {
    flex: 1;
  }
`;

const Secao = styled.button`
  height: 22px;
  border: 1px solid #a0a0a0;
  border-top-color: #ffffff;
  background-color: #f0f0f0;
  text-align: center;
`;

const BarraArvore = styled.div`
  height: 27px;
  padding: 0 6px;
  display: flex;
  align-items: center;
  gap: 7px;
  border: 1px solid #a0a0a0;
  border-width: 1px 1px 0;
  background: linear-gradient(#fdfdfd, #ededed);
`;

const CaixaArvore = styled.div`
  flex: 1;
  margin-bottom: 2px;
  margin-left: 2px;
  padding-top: 1px;
  display: flex;
  border: 1px solid #828790;
  background-color: #ffffff;
`;

const Ramos = styled.div`
  flex: 1;
`;

const Folha = styled.div`
  height: 16px;
  padding-left: 12px;
  display: flex;
  align-items: center;
  white-space: nowrap;
`;

const Vertical = styled.span`
  width: 1px;
  height: ${({ $meio }) => ($meio ? 8 : 16)}px;
  align-self: flex-start;
  border-left: 1px dotted #808080;
  visibility: ${({ $oculto }) => ($oculto ? "hidden" : "visible")};

  & + & {
    margin-left: 18px;
  }
`;

const Horizontal = styled.span`
  width: ${({ $w }) => $w}px;
  border-top: 1px dotted #808080;
`;

const Rotulo = styled.span`
  display: flex;
  align-items: center;
  gap: 4px;
  background-color: ${({ $ativo }) => ($ativo ? "#d9d9d9" : "transparent")};
`;

const Meia = styled.span`
  font-family: "Liberation Mono", monospace;
  font-size: 10px;
`;

const Novo = styled.b`
  padding-left: 1px;
  font-size: 9px;
  line-height: 10px;
  align-self: flex-start;
  text-shadow: 0 0 1px #ffd800, 1px 1px 0 #ffd800, -1px -1px 0 #ffd800, 1px -1px 0 #ffd800;
`;

const Pasta = styled.div`
  height: 16px;
  padding-left: 5px;
  display: flex;
  align-items: center;
  color: ${({ $aberto }) => ($aberto ? "#404040" : "#9a9a9a")};
`;

const NomePasta = styled.span`
  padding-left: 5px;
  color: #000000;
`;

const Trilho = styled.div`
  width: 17px;
  padding: 3px 0;
  display: flex;
  flex-direction: column;
  align-items: center;
  gap: 2px;
  background-color: #f0f0f0;
  color: #505050;
`;

const Polegar = styled.div`
  flex: 1;
  width: 15px;
  margin: ${({ $inicio, $fim }) => `${$inicio}px 0 ${$fim}px`};
  background-color: #cdcdcd;
`;

const Trabalho = styled.section`
  flex: 1;
  min-width: 0;
  display: flex;
  flex-direction: column;
`;

const Area = styled.div`
  flex: 1;
  display: flex;
  gap: 5px;
`;

const ColunaLista = styled.div`
  width: 183px;
  display: flex;
  flex-direction: column;
`;

const Busca = styled.div`
  padding: 4px 5px 2px 1px;
  display: flex;
  align-items: center;
  justify-content: space-between;
`;

const CampoBusca = styled.input`
  width: 157px;
  height: 24px;
  padding-left: 2px;
  border: 1px solid #7a7a7a;
  background-color: #ffffff;

  &::placeholder {
    color: #7c7c7c;
  }
`;

const CaixaLista = styled.div`
  flex: 1;
  display: flex;
  padding-top: 1px;
  border: 1px solid #828790;
  background-color: #ffffff;
`;

const Item = styled.div`
  height: 16px;
  padding-left: 31px;
  display: flex;
  align-items: center;
`;

const NomeItem = styled.span`
  height: 16px;
  padding: 0 5px 0 3px;
  display: flex;
  align-items: center;
  gap: 7px;
  background-color: ${({ $ativo }) => ($ativo ? "#2f5cc0" : "transparent")};
`;

const Propriedades = styled.div`
  flex: 1;
  margin-right: 4px;
  display: flex;
  padding: 3px;
  border: 1px solid #dcdcdc;
  background-color: #ffffff;
`;

const Fundo = styled.div`
  flex: 1;
  padding: 4px 2px;
  display: flex;
  align-items: flex-end;
  justify-content: flex-end;
  border: 1px solid #a0a0a0;
  color: #505050;
`;

const Status = styled.footer`
  height: 20px;
  display: grid;
  grid-template-columns: 148px 78px 97px 47px 1fr 72px;
  gap: 2px;

  > span {
    padding: 0 2px;
    border: 1px solid #d4d4d4;
    background: linear-gradient(#fdfdfd, #f0f0f0);
    line-height: 18px;
    white-space: nowrap;
  }
`;

const Janela = styled.section`
  position: absolute;
  top: 102px;
  left: 468px;
  right: 0;
  padding: 0 0 7px 7px;
  border: 1px solid #4a4f55;
  border-right: none;
  background: linear-gradient(#b9c9d9, #d7e3f0 30px);
`;

const TituloJanela = styled.h2`
  height: 30px;
  margin: 0;
  padding-top: 10px;
  font-size: 12px;
  font-weight: 400;
  color: #929aa3;
`;

const Conteudo = styled.div`
  background-color: #f0f0f0;
`;

const Abas = styled.div`
  height: 21px;
  display: flex;
  align-items: flex-end;
  border-bottom: 1px solid #d9d9d9;
`;

const Aba = styled.button`
  height: ${({ $ativa }) => ($ativa ? 21 : 19)}px;
  padding: ${({ $ativa }) => ($ativa ? "0 12px 0 8px" : "0 9px 0 4px")};
  border: 1px solid #d9d9d9;
  border-bottom: none;
  background-color: ${({ $ativa }) => ($ativa ? "#ffffff" : "#f0f0f0")};
`;

const Corpo = styled.div`
  padding: 3px 0 0 4px;
  background-color: #ffffff;
`;

const BarraEditor = styled.div`
  height: 28px;
  padding: 0 5px;
  display: flex;
  align-items: center;
  gap: 7px;
  border-bottom: 1px solid #ffffff;
  background: linear-gradient(#fdfdfd, #efefef);
  white-space: nowrap;
`;

const Alca = styled.span`
  width: 2px;
  height: 14px;
  margin-right: -3px;
  border-left: 2px dotted #b0b0b0;
`;

const Opcoes = styled.div`
  padding-right: 4px;
  display: flex;
  gap: 9px;
  background-color: #f0f0f0;
`;

const Opcao = styled.label`
  display: flex;
  align-items: center;
  gap: 8px;

  input {
    width: 11px;
    height: 11px;
    appearance: none;
    border: 1px solid #8a8a8a;
    border-radius: 50%;
    background-color: #ffffff;
  }

  input:checked {
    background: radial-gradient(#000000 2px, #ffffff 3px);
  }
`;

const Eixo = styled.label`
  width: 21px;
`;

const CaixaNumero = styled.div`
  width: 78px;
  height: 23px;
  padding: 0 3px;
  display: flex;
  align-items: center;
  gap: 7px;
  border: 1px solid #6e6e6e;
  background-color: #f6f6f6;
  color: #7c7c7c;

  input {
    flex: 1;
    min-width: 0;
    text-align: right;
  }
`;

const Unidade = styled.span`
  margin: 0 5px 0 -2px;
`;

const Tela = styled.svg`
  display: block;
  width: 100%;
  height: 397px;
  background-color: #000000;
`;

const Cota = styled.text`
  fill: #00ff00;
  font: 700 15px "Liberation Mono", monospace;
  text-anchor: middle;
`;

const CotaFina = styled.text`
  fill: #c0c0c0;
  font: 12px "Liberation Mono", monospace;
  text-anchor: middle;
`;

const Rodape = styled.div`
  height: 32px;
  padding: 3px 6px;
  border-bottom: 1px solid #dcdcdc;
`;

const Dinamico = styled.button`
  height: 23px;
  padding: 0 4px;
  border: 1px solid #2a7fd0;
  background-color: #cce4f7;
`;

const Estado = styled.div`
  height: 22px;
  padding-left: 4px;
  display: flex;
  align-items: center;
  background: linear-gradient(#fdfdfd, #f0f0f0);

  span:last-child {
    padding-left: 5px;
  }
`;

const Coordenada = styled.span`
  width: 94px;
  line-height: 20px;
  border-right: 1px solid #d0d0d0;
  white-space: nowrap;
`;

const Caixa = styled.section`
  position: absolute;
  top: 272px;
  left: 478px;
  width: 411px;
  border: 1px solid #1883e8;
  background-color: #f0f0f0;
  box-shadow: 0 2px 8px rgba(0, 0, 0, 0.3);
`;

const TopoDialogo = styled.div`
  height: 25px;
  padding: 0 8px 0 3px;
  display: flex;
  align-items: center;
  justify-content: space-between;
  background-color: #ffffff;
`;

const Fechar = styled.button`
  display: flex;
`;

const Formulario = styled.form`
  padding: 14px 13px 7px;
  display: flex;
  flex-direction: column;
`;

const Grupo = styled.div`
  height: 58px;
  margin: 8px 0 7px;
  padding: 0 9px 7px 7px;
  border: 1px solid #dcdcdc;

  label {
    display: table;
    height: 18px;
    margin-top: -9px;
    padding-right: 2px;
    background-color: #f0f0f0;
    line-height: 18px;
    white-space: nowrap;
  }

  textarea {
    display: block;
    width: 100%;
    height: 41px;
    padding: 1px;
    border: 1px solid #7a7a7a;
    outline: none;
    resize: none;
    background-color: #ffffff;
    font: 10px/14px "Liberation Mono", monospace;
  }

  textarea::selection {
    background-color: #0078d7;
    color: #ffffff;
  }
`;

const Acoes = styled.div`
  padding-top: 5px;
  display: flex;
  justify-content: flex-end;
  gap: 14px;
`;

const Acao = styled.button`
  width: 73px;
  height: 24px;
  border: 1px solid #adadad;
  background-color: #e1e1e1;
`;

const Destaque = styled(Svg)`
  position: absolute;
  top: 103px;
  left: 434px;
  pointer-events: none;
`;

const BarraSogou = styled.div`
  position: absolute;
  top: 70px;
  left: 908px;
  height: 24px;
  padding: 0 4px 0 21px;
  display: flex;
  align-items: center;
  gap: 6px;
  border: 1px solid #b4c0d4;
  background-color: #ffffff;
  color: #1b73d0;
  font-size: 15px;
`;

const LogoSogou = styled.span`
  position: absolute;
  left: -12px;
  top: -4px;
`;

const Selo = styled.div`
  position: absolute;
  top: -28px;
  left: 1091px;
  width: 48px;
  height: 48px;
  padding-top: 27px;
  border: 3px solid #c4c4c4;
  border-radius: 50%;
  background-color: #45c85c;
  box-shadow: inset 0 0 0 1px #1f8a48, 0 1px 4px rgba(0, 0, 0, 0.4);
  color: #ffffff;
  font-weight: 700;
  line-height: 12px;
  text-align: center;
`;

const Tarefas = styled.footer`
  height: 40px;
  display: flex;
  align-items: center;
  background-color: #02090c;
  color: #ffffff;
  white-space: nowrap;
`;

const Iniciar = styled.button`
  width: 48px;
  height: 40px;
  display: flex;
  align-items: center;
  justify-content: center;
`;

const Cortana = styled.div`
  width: 337px;
  height: 40px;
  padding: 0 5px 0 9px;
  display: flex;
  align-items: center;
  gap: 6px;
  background-color: #333333;

  input {
    flex: 1;
    font-size: 14px;
  }

  input::placeholder {
    color: #a6a6a6;
  }
`;

const Anel = styled.span`
  width: 21px;
  height: 21px;
  border: 3px solid #ffffff;
  border-radius: 50%;
`;

const Largos = styled.div`
  width: 204px;
  margin-left: 6px;
  display: flex;
  justify-content: space-around;
  align-items: center;
`;

const Apps = styled.div`
  width: 316px;
  margin: 0 12px 0 2px;
  display: flex;
`;

const Programa = styled.span`
  flex: 1;
  height: 40px;
  margin: 0 ${({ $frente }) => ($frente ? 0 : 4)}px;
  display: flex;
  align-items: center;
  justify-content: center;
  border-bottom: 3px solid ${({ $aberto }) => ($aberto ? "#76b9ed" : "transparent")};
  background-color: ${({ $frente }) => ($frente ? "#3a4447" : "transparent")};
`;

const Pilha = styled.div`
  display: flex;
  flex-direction: column;
  align-items: center;
  gap: 2px;
  margin-left: 18px;
`;

const Bandeja = styled.div`
  flex: 1;
  padding-left: 18px;
  display: flex;
  align-items: center;
  gap: 9px;

  svg:first-child {
    margin-right: 22px;
  }
`;

const Avisos = styled.div`
  margin: 0 22px 0 18px;
  position: relative;
`;

const Contador = styled.span`
  position: absolute;
  left: 9px;
  top: 7px;
  width: 15px;
  height: 15px;
  border: 1px solid #888888;
  border-radius: 50%;
  background-color: #222222;
  line-height: 13px;
  text-align: center;
`;
